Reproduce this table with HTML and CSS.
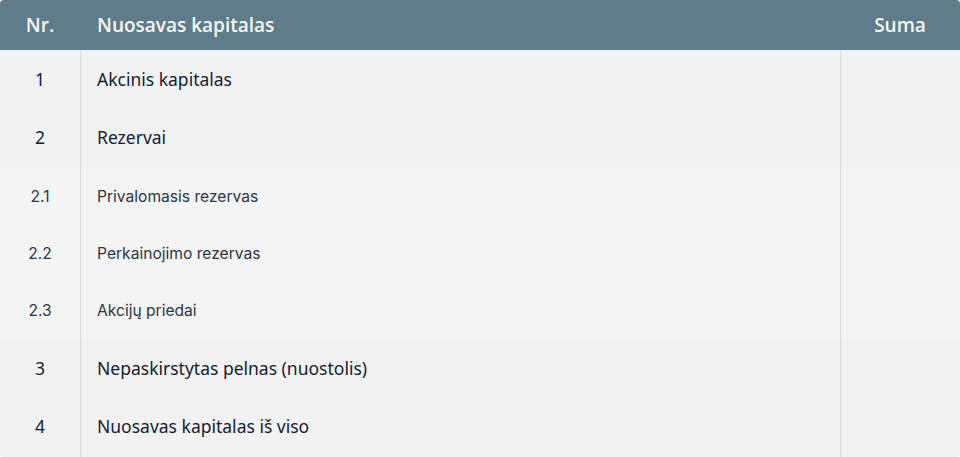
FILE: index.html
```html
<!DOCTYPE html>
<html lang="lt">
<head>
<meta charset="utf-8">
<link rel="stylesheet" href="styles.css">
</head>
<body>
<div class="table">
  <div class="row head">
    <div class="c-nr">Nr.</div>
    <div class="c-name">Nuosavas kapitalas</div>
    <div class="c-sum">Suma</div>
  </div>
  <div class="row main r1">
    <div class="c-nr">1</div>
    <div class="c-name">Akcinis kapitalas</div>
    <div class="c-sum"></div>
  </div>
  <div class="row main r2">
    <div class="c-nr">2</div>
    <div class="c-name">Rezervai</div>
    <div class="c-sum"></div>
  </div>
  <div class="row sub">
    <div class="c-nr">2.1</div>
    <div class="c-name">Privalomasis rezervas</div>
    <div class="c-sum"></div>
  </div>
  <div class="row sub">
    <div class="c-nr">2.2</div>
    <div class="c-name">Perkainojimo rezervas</div>
    <div class="c-sum"></div>
  </div>
  <div class="row sub">
    <div class="c-nr">2.3</div>
    <div class="c-name">Akcijų priedai</div>
    <div class="c-sum"></div>
  </div>
  <div class="row main r3">
    <div class="c-nr">3</div>
    <div class="c-name">Nepaskirstytas pelnas (nuostolis)</div>
    <div class="c-sum"></div>
  </div>
  <div class="row main r4">
    <div class="c-nr">4</div>
    <div class="c-name">Nuosavas kapitalas iš viso</div>
    <div class="c-sum"></div>
  </div>
</div>
</body>
</html>
```
FILE: styles.css
```css
html, body {
  margin: 0;
  padding: 0;
  background: #ffffff;
}
.table {
  width: 960px;
  height: 457px;
  background: #f2f2f2;
  border-radius: 4px;
  overflow: hidden;
  display: flex;
  flex-direction: column;
}
.row {
  display: grid;
  grid-template-columns: 80px 760px 120px;
  align-items: stretch;
}
.row > div {
  display: flex;
  align-items: center;
}
.c-nr {
  justify-content: center;
}
.c-name {
  padding-left: 16px;
  border-left: 1px solid #dcdcdc;
}
.c-sum {
  justify-content: center;
  border-left: 1px solid #dcdcdc;
}
.head {
  height: 50px;
  background: #607c8a;
  color: #f6f8f9;
  font-family: "Open Sans", "Noto Sans", sans-serif;
  font-weight: 600;
  font-size: 19px;
}
.head > div {
  border-left: none;
  padding-bottom: 1px;
}
.head .c-name {
  padding-left: 17px;
}
.main {
  color: #141d33;
  font-family: "Noto Sans", sans-serif;
  font-size: 17.5px;
}
.r1 { height: 58px; }
.r2 { height: 60px; }
.r3 { height: 58px; }
.r4 { height: 60px; }
.r2 > div, .r4 > div {
  padding-bottom: 2px;
}
.sub {
  height: 57px;
  background: #f4f4f4;
  color: #2d3547;
  font-family: "Inter", sans-serif;
  font-size: 15.6px;
}
```
